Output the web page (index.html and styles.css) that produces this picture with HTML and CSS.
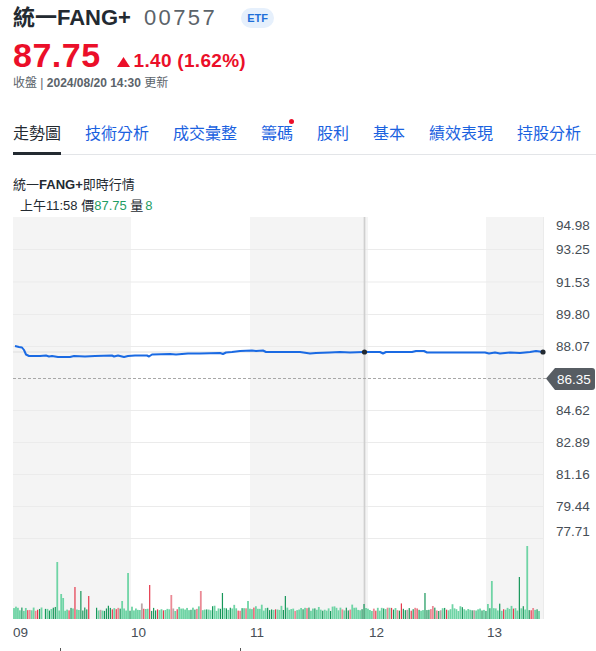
FILE: index.html
```html
<!DOCTYPE html>
<html lang="zh-Hant">
<head>
<meta charset="utf-8">
<title>統一FANG+ 00757</title>
<link rel="stylesheet" href="styles.css">
</head>
<body>
<div class="page">
  <header class="quote-head">
    <div class="title-row">
      <h1 class="name">統一FANG+</h1>
      <span class="code">00757</span>
      <span class="badge">ETF</span>
    </div>
    <div class="price-row">
      <span class="price">87.75</span>
      <span class="change"><svg class="tri" viewBox="0 0 13 10" width="13" height="10"><path d="M6.5 0 L13 10 H0 Z"/></svg>1.40 (1.62%)</span>
    </div>
    <div class="status">收盤 | <b>2024/08/20 14:30</b> 更新</div>
  </header>

  <nav class="tabs">
    <span class="tab active">走勢圖</span>
    <span class="tab">技術分析</span>
    <span class="tab">成交彙整</span>
    <span class="tab">籌碼<i class="dot"></i></span>
    <span class="tab">股利</span>
    <span class="tab">基本</span>
    <span class="tab">績效表現</span>
    <span class="tab">持股分析</span>
  </nav>

  <section class="chart-block">
    <div class="chart-title">統一<b>FANG+</b>即時行情</div>
    <div class="chart-sub">上午11:58 價<span class="up">87.75</span> 量<span class="up vol-num">8</span></div>
    <svg class="chart" viewBox="13 217 583 434" width="583" height="434">
      <g class="bands">
        <rect x="13" y="217" width="118" height="402"/>
        <rect x="250" y="217" width="118" height="402"/>
        <rect x="486" y="217" width="57" height="402"/>
      </g>
      <g class="grid">
        <line x1="13" x2="543" y1="249.5" y2="249.5"/>
        <line x1="13" x2="543" y1="282" y2="282"/>
        <line x1="13" x2="543" y1="314.5" y2="314.5"/>
        <line x1="13" x2="543" y1="346.5" y2="346.5"/>
        <line x1="13" x2="543" y1="410.5" y2="410.5"/>
        <line x1="13" x2="543" y1="442.5" y2="442.5"/>
        <line x1="13" x2="543" y1="474.5" y2="474.5"/>
        <line x1="13" x2="543" y1="506.5" y2="506.5"/>
        <line x1="13" x2="543" y1="538.5" y2="538.5"/>
        <line x1="543.5" x2="543.5" y1="217" y2="619"/>
      </g>
      <line class="cross-h" x1="13" x2="543" y1="352" y2="352"/>
      <line class="cross-v" x1="364.5" x2="364.5" y1="217" y2="619"/>
      <line class="prev" x1="13" x2="548" y1="378.5" y2="378.5"/>
      <g id="vol"></g>
      <path class="price-line" d="M15,346 L19,347 L22,347.5 L24,350 L26,354.5 L29,356 L40,356 L46,355.5 L49,356.5 L52,356 L58,357 L70,357 L74,356 L85,356.5 L95,356 L112,355.5 L114,356.5 L118,355.5 L124,357 L128,356 L135,355.5 L147,355.5 L149,356.5 L152,354.5 L170,354 L176,354.5 L188,353.5 L200,353.5 L220,353 L223,354 L226,352.5 L232,352 L240,351 L252,350.5 L256,351 L263,350.5 L266,352 L280,352 L300,352 L310,353.5 L316,353 L330,352.5 L340,352 L350,352.5 L364,352 L380,352 L383,353.5 L386,352 L412,352 L416,351 L424,351 L427,352.5 L485,352.5 L489,353.5 L495,352.5 L500,353.5 L510,352.5 L520,353 L530,352 L536,351 L543,352"/>
      <circle class="pt" cx="364.5" cy="352" r="2.6"/>
      <circle class="pt" cx="543" cy="352" r="2.6"/>
      <path class="last-badge" d="M546 378.5 L555 368 H592 Q595 368 595 371 V387 Q595 390 592 390 H555 Z"/>
      <text class="badge-txt" x="557" y="383.5">86.35</text>
      <g class="axis">
        <text x="556" y="229.5">94.98</text>
        <text x="556" y="254">93.25</text>
        <text x="556" y="286.5">91.53</text>
        <text x="556" y="318.5">89.80</text>
        <text x="556" y="351">88.07</text>
        <text x="556" y="414.5">84.62</text>
        <text x="556" y="446.5">82.89</text>
        <text x="556" y="478.5">81.16</text>
        <text x="556" y="510.5">79.44</text>
        <text x="556" y="535.5">77.71</text>
        <text x="13" y="636.5">09</text>
        <text x="131" y="636.5">10</text>
        <text x="250" y="636.5">11</text>
        <text x="369" y="636.5">12</text>
        <text x="487" y="636.5">13</text>
      </g>
      <g class="ticks">
        <line x1="60.5" x2="60.5" y1="648" y2="651"/>
        <line x1="240.5" x2="240.5" y1="648" y2="651"/>
      </g>
    </svg>
  </section>
</div>
<script src="script.js"></script>
</body>
</html>
```

FILE: styles.css
```css
html, body {
  margin: 0;
  padding: 0;
  overflow: hidden;
  background: #fff;
}
body {
  font-family: "Liberation Sans", "Noto Sans CJK TC", sans-serif;
  color: #232a31;
}
.page {
  padding: 5px 0 0 13px;
}
.title-row {
  display: flex;
  align-items: center;
  height: 26px;
}
.name {
  margin: 0;
  font-size: 22px;
  line-height: 26px;
  font-weight: 700;
}
.code {
  margin-left: 13px;
  font-size: 22px;
  line-height: 26px;
  color: #5b636a;
  letter-spacing: 2.4px;
}
.badge {
  margin-left: 24px;
  height: 20px;
  padding: 0 6px;
  border-radius: 10px;
  background: #e6f0fc;
  color: #1e6fd9;
  font-size: 11px;
  font-weight: 700;
  line-height: 20px;
}
.price-row {
  display: flex;
  align-items: baseline;
  height: 39px;
  margin-top: 5px;
  color: #eb0f29;
}
.price {
  font-size: 34px;
  line-height: 39px;
  font-weight: 700;
  letter-spacing: 0.5px;
}
.change {
  margin-left: 16px;
  font-size: 19px;
  font-weight: 700;
  letter-spacing: 0.3px;
}
.tri {
  fill: #eb0f29;
  margin-right: 4px;
  vertical-align: 0;
}
.status {
  font-size: 12px;
  line-height: 16px;
  color: #5b636a;
}
.status b {
  font-weight: 700;
}
.tabs {
  display: flex;
  gap: 24px;
  margin-top: 24px;
  box-shadow: inset 0 -1px 0 #e3e5e8;
}
.tab {
  position: relative;
  padding: 8px 0 7px;
  font-size: 16px;
  line-height: 22px;
  color: #1b62df;
  border-bottom: 3px solid transparent;
  white-space: nowrap;
}
.tab.active {
  color: #232a31;
  border-bottom-color: #232a31;
}
.dot {
  position: absolute;
  top: 4px;
  right: -1px;
  width: 5px;
  height: 5px;
  border-radius: 50%;
  background: #eb0f29;
}
.chart-title {
  margin-top: 21px;
  font-size: 13px;
  line-height: 18px;
}
.chart-title b {
  font-weight: 700;
}
.chart-sub {
  margin-top: 3px;
  padding-left: 7px;
  font-size: 13px;
  line-height: 18px;
}
.up {
  color: #1f9d63;
}
.vol-num {
  margin-left: 2px;
}
.chart {
  display: block;
  margin-top: 2px;
}
.bands rect {
  fill: #f4f4f4;
}
.grid line {
  stroke: #ebebeb;
  stroke-width: 1;
}
.cross-h {
  stroke: #dedede;
  stroke-width: 1;
}
.cross-v {
  stroke: #cfcfcf;
  stroke-width: 1.7;
}
.prev {
  stroke: #a8a8a8;
  stroke-width: 1;
  stroke-dasharray: 3 2;
}
.price-line {
  fill: none;
  stroke: #1a6ae3;
  stroke-width: 2;
  stroke-linejoin: round;
}
.pt {
  fill: #232a31;
}
.last-badge {
  fill: #575d63;
}
.badge-txt {
  font-family: "Liberation Sans", sans-serif;
  font-size: 13.5px;
  fill: #fff;
}
.axis text {
  font-family: "Liberation Sans", sans-serif;
  font-size: 13.5px;
  fill: #464e56;
}
.ticks line {
  stroke: #555;
  stroke-width: 1;
}
```

FILE: script.js
```js
(function () {
  var ns = "http://www.w3.org/2000/svg";
  var g = document.getElementById("vol");
  var seed = 12345;
  function rnd() {
    seed = (seed * 16807) % 2147483647;
    return (seed - 1) / 2147483646;
  }
  var LIGHT = "#6fd4a5", DARK = "#17975a", RED = "#e5384b", PINK = "#eb8a95", GRAY = "#bba7a7";
  var spikes = [
    [57, 562, LIGHT], [61, 594, LIGHT], [64, 598, LIGHT], [75, 587, RED], [81, 591, DARK],
    [88, 596, RED], [122, 601, LIGHT], [128, 573, LIGHT], [150, 585, RED], [172, 595, PINK],
    [200, 591, PINK], [223, 593, DARK], [248, 601, LIGHT], [286, 596, DARK], [365, 604, DARK],
    [424, 593, DARK], [488, 604, LIGHT], [491, 581, LIGHT], [519, 577, DARK], [527, 546, LIGHT]
  ];
  var step = 527 / 268;
  var n = 268;
  var spikeAt = {};
  spikes.forEach(function (s) {
    var i = Math.round((s[0] - 14) / step);
    spikeAt[i] = s;
  });
  for (var i = 0; i < n; i++) {
    var x = 14 + i * step;
    var top, color;
    var r = rnd();
    if ((x > 42 && x < 45) || (x > 89.5 && x < 96)) continue;
    if (spikeAt[i]) {
      top = spikeAt[i][1];
      color = spikeAt[i][2];
    } else {
      var h = 8 + rnd() * 3.5;
      if (rnd() < 0.1) h += 2 + rnd() * 3;
      top = 619 - h;
      color = r < 0.62 ? LIGHT : r < 0.86 ? DARK : r < 0.92 ? RED : r < 0.96 ? PINK : GRAY;
    }
    var rect = document.createElementNS(ns, "rect");
    var w = color === LIGHT || color === GRAY || color === PINK ? 1.8 : 1.2;
    rect.setAttribute("x", (x - w / 2).toFixed(2));
    rect.setAttribute("y", top.toFixed(2));
    rect.setAttribute("width", w);
    rect.setAttribute("height", (619 - top).toFixed(2));
    rect.setAttribute("fill", color);
    g.appendChild(rect);
  }
})();
```
